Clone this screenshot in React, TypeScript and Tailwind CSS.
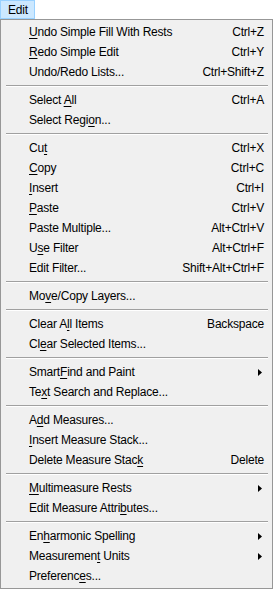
type Item = {
  label: string;
  key?: number; // index of mnemonic letter
  shortcut?: string;
  sub?: boolean;
};

type Entry = Item | "sep";

const entries: Entry[] = [
  { label: "Undo Simple Fill With Rests", key: 0, shortcut: "Ctrl+Z" },
  { label: "Redo Simple Edit", key: 0, shortcut: "Ctrl+Y" },
  { label: "Undo/Redo Lists...", shortcut: "Ctrl+Shift+Z" },
  "sep",
  { label: "Select All", key: 7, shortcut: "Ctrl+A" },
  { label: "Select Region...", key: 11 },
  "sep",
  { label: "Cut", key: 2, shortcut: "Ctrl+X" },
  { label: "Copy", key: 0, shortcut: "Ctrl+C" },
  { label: "Insert", key: 0, shortcut: "Ctrl+I" },
  { label: "Paste", key: 0, shortcut: "Ctrl+V" },
  { label: "Paste Multiple...", shortcut: "Alt+Ctrl+V" },
  { label: "Use Filter", key: 1, shortcut: "Alt+Ctrl+F" },
  { label: "Edit Filter...", shortcut: "Shift+Alt+Ctrl+F" },
  "sep",
  { label: "Move/Copy Layers...", key: 2 },
  "sep",
  { label: "Clear All Items", key: 7, shortcut: "Backspace" },
  { label: "Clear Selected Items...", key: 2 },
  "sep",
  { label: "SmartFind and Paint", key: 5, sub: true },
  { label: "Text Search and Replace...", key: 2 },
  "sep",
  { label: "Add Measures...", key: 1 },
  { label: "Insert Measure Stack...", key: 0 },
  { label: "Delete Measure Stack", key: 19, shortcut: "Delete" },
  "sep",
  { label: "Multimeasure Rests", key: 0, sub: true },
  { label: "Edit Measure Attributes...", key: 18 },
  "sep",
  { label: "Enharmonic Spelling", key: 2, sub: true },
  { label: "Measurement Units", key: 10, sub: true },
  { label: "Preferences...", key: 9 },
];

function Label({ text, k }: { text: string; k?: number }) {
  if (k === undefined) return <span>{text}</span>;
  return (
    <span>
      {text.slice(0, k)}
      <span className="underline underline-offset-[2px] decoration-1">{text[k]}</span>
      {text.slice(k + 1)}
    </span>
  );
}

function Arrow() {
  return (
    <svg width="4" height="7" viewBox="0 0 4 7" className="block">
      <path d="M0 0 L4 3.5 L0 7 Z" fill="#000" />
    </svg>
  );
}

export default function App() {
  return (
    <div
      className="w-[273px] h-[589px] bg-white text-[12px] tracking-[-0.2px] text-black flex flex-col"
      style={{ fontFamily: '"Liberation Sans", Arial, sans-serif' }}
    >
      <div className="h-[19px] flex shrink-0">
        <div className="w-[35px] h-[19px] bg-[#cce8ff] border border-[#99d1ff] flex items-center pl-[7px]">
          Edit
        </div>
      </div>

      <div className="flex-1 bg-[#f0f0f0] border border-[#979797] pt-[2px] px-[2px] flex flex-col">
        {entries.map((e, i) =>
          e === "sep" ? (
            <div key={i} className="h-[8px] flex flex-col justify-center pl-[3px] pr-[2px]">
              <div className="h-px bg-[#a0a0a0]" />
              <div className="h-px bg-white" />
            </div>
          ) : (
            <div key={i} className="h-[20px] flex items-center pl-[26px] pr-[6px]">
              <div className="flex-1 whitespace-nowrap">
                <Label text={e.label} k={e.key} />
              </div>
              {e.shortcut && <div className="whitespace-nowrap">{e.shortcut}</div>}
              {e.sub && (
                <div className="pr-[2px]">
                  <Arrow />
                </div>
              )}
            </div>
          )
        )}
      </div>
    </div>
  );
}
